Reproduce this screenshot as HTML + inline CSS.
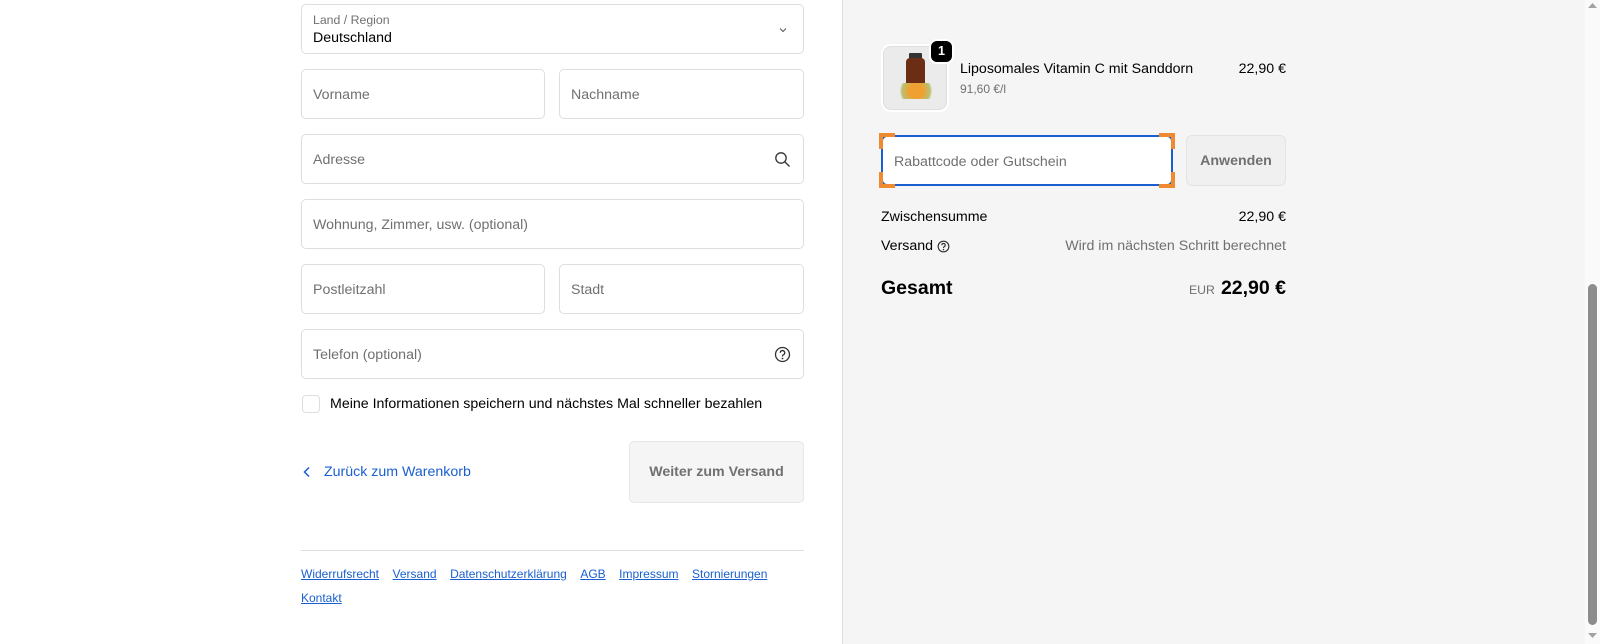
<!DOCTYPE html>
<html><head><meta charset="utf-8"><style>
*{box-sizing:border-box;margin:0;padding:0}
body{width:1600px;height:644px;overflow:hidden;background:#fff;font-family:"Liberation Sans",Arial,sans-serif;color:#000;position:relative;font-size:14px}
.a{position:absolute}
.f{position:absolute;border:1px solid #dedede;border-radius:5px;background:#fff}
.ph{position:absolute;left:11px;top:50%;transform:translateY(-45%);color:#707070;font-size:14.2px}
.right{position:absolute;left:842px;top:0;width:743px;height:644px;background:#f5f5f5;border-left:1px solid #dedede}
.sb{position:absolute;left:1585px;top:0;width:15px;height:644px;background:#fafafa}
.ft a{color:#1a5fd0;text-decoration:underline;font-size:12px;margin-right:13.5px}
</style></head><body>
<div class="f" style="left:301px;top:4px;width:503px;height:50px">
 <div class="a" style="left:11px;top:8px;font-size:12.3px;color:#707070">Land / Region</div>
 <div class="a" style="left:11px;top:25px;font-size:14.2px">Deutschland</div>
 <svg class="a" style="right:14px;top:19px" width="12" height="12" viewBox="0 0 12 12"><path d="M3 4.5l3 3 3-3" fill="none" stroke="#555" stroke-width="1"/></svg>
</div>
<div class="f" style="left:301px;top:69px;width:244px;height:50px"><span class="ph">Vorname</span></div>
<div class="f" style="left:559px;top:69px;width:245px;height:50px"><span class="ph">Nachname</span></div>
<div class="f" style="left:301px;top:134px;width:503px;height:50px"><span class="ph">Adresse</span>
 <svg class="a" style="right:12px;top:16px" width="17" height="17" viewBox="0 0 17 17"><circle cx="7" cy="7" r="5.2" fill="none" stroke="#333" stroke-width="1.3"/><path d="M11 11l4.5 4.5" stroke="#333" stroke-width="1.3"/></svg></div>
<div class="f" style="left:301px;top:199px;width:503px;height:50px"><span class="ph">Wohnung, Zimmer, usw. (optional)</span></div>
<div class="f" style="left:301px;top:264px;width:244px;height:50px"><span class="ph">Postleitzahl</span></div>
<div class="f" style="left:559px;top:264px;width:245px;height:50px"><span class="ph">Stadt</span></div>
<div class="f" style="left:301px;top:329px;width:503px;height:50px"><span class="ph">Telefon (optional)</span>
 <svg class="a" style="right:12px;top:16px" width="17" height="17" viewBox="0 0 17 17"><circle cx="8.5" cy="8.5" r="7" fill="none" stroke="#333" stroke-width="1.3"/><path d="M6.3 6.8a2.2 2.2 0 1 1 3 2c-.6.3-.8.7-.8 1.3v.4" fill="none" stroke="#333" stroke-width="1.3"/><circle cx="8.5" cy="12.5" r=".9" fill="#333"/></svg></div>
<div class="a" style="left:302px;top:395px;width:18px;height:18px;border:1px solid #dedede;border-radius:4px"></div>
<div class="a" style="left:330px;top:396px;font-size:14.2px">Meine Informationen speichern und nächstes Mal schneller bezahlen</div>
<svg class="a" style="left:301px;top:466px" width="12" height="12" viewBox="0 0 12 12"><path d="M8 1.5L3.5 6 8 10.5" fill="none" stroke="#1a5fd0" stroke-width="1.5"/></svg>
<div class="a" style="left:324px;top:464px;color:#1a5fd0;font-size:14.2px">Zurück zum Warenkorb</div>
<div class="a" style="left:629px;top:441px;width:175px;height:62px;background:#f5f5f5;border:1px solid #e6e6e6;border-radius:5px;color:#707070;font-weight:bold;font-size:14.2px;text-align:center;line-height:60px">Weiter zum Versand</div>
<div class="a" style="left:301px;top:550px;width:503px;height:1px;background:#dedede"></div>
<div class="a ft" style="left:301px;top:562px;width:520px;line-height:23px"><a>Widerrufsrecht</a><a>Versand</a><a>Datenschutzerklärung</a><a>AGB</a><a>Impressum</a><a>Stornierungen</a><br><a>Kontakt</a></div>

<div class="right"></div>
<div class="a" style="left:883px;top:46px;width:64px;height:64px;border:1px solid #dedede;border-radius:8px;background:#ebebeb;overflow:hidden;box-shadow:0 0 0 2px #fff">
 <div class="a" style="left:25px;top:6px;width:13px;height:6px;background:#333;border-radius:1px"></div>
 <div class="a" style="left:22px;top:11px;width:19px;height:40px;background:#6b2e14;border-radius:4px 4px 2px 2px"></div>
 <div class="a" style="left:10px;top:36px;width:44px;height:16px;background:radial-gradient(circle,#f0a030 0 30%,#b8c070 60%,transparent 70%)"></div>
</div>
<div class="a" style="left:931px;top:41px;width:21px;height:21px;background:#000;color:#fff;border-radius:6px;font-weight:bold;font-size:12.5px;text-align:center;line-height:21px;box-shadow:0 0 0 2px #fff">1</div>
<div class="a" style="left:960px;top:61px;font-size:14.2px">Liposomales Vitamin C mit Sanddorn</div>
<div class="a" style="left:960px;top:82px;font-size:12px;color:#707070">91,60 €/l</div>
<div class="a" style="left:1200px;top:61px;width:86px;text-align:right;font-size:14.2px">22,90 €</div>
<div class="a" style="left:881px;top:135px;width:292px;height:51px;background:#fff;border:2px solid #1a5fd0;border-radius:6px"><span class="ph" style="left:11px">Rabattcode oder Gutschein</span></div>
<div class="a" style="left:879px;top:133px;width:16px;height:4px;background:#f08a30"></div><div class="a" style="left:879px;top:133px;width:4px;height:16px;background:#f08a30"></div>
<div class="a" style="left:1159px;top:133px;width:16px;height:4px;background:#f08a30"></div><div class="a" style="left:1171px;top:133px;width:4px;height:16px;background:#f08a30"></div>
<div class="a" style="left:879px;top:184px;width:16px;height:4px;background:#f08a30"></div><div class="a" style="left:879px;top:172px;width:4px;height:16px;background:#f08a30"></div>
<div class="a" style="left:1159px;top:184px;width:16px;height:4px;background:#f08a30"></div><div class="a" style="left:1171px;top:172px;width:4px;height:16px;background:#f08a30"></div>
<div class="a" style="left:1186px;top:135px;width:100px;height:51px;background:#f0f0f0;border:1px solid #e3e3e3;border-radius:6px;color:#707070;font-weight:bold;font-size:14.2px;text-align:center;line-height:51px">Anwenden</div>
<div class="a" style="left:881px;top:209px;font-size:14.2px">Zwischensumme</div>
<div class="a" style="left:1150px;top:209px;width:136px;text-align:right;font-size:14.2px">22,90 €</div>
<div class="a" style="left:881px;top:238px;font-size:14.2px">Versand</div>
<svg class="a" style="left:937px;top:240px" width="13" height="13" viewBox="0 0 17 17"><circle cx="8.5" cy="8.5" r="7" fill="none" stroke="#333" stroke-width="1.5"/><path d="M6.3 6.8a2.2 2.2 0 1 1 3 2c-.6.3-.8.7-.8 1.3v.4" fill="none" stroke="#333" stroke-width="1.5"/><circle cx="8.5" cy="12.5" r="1" fill="#333"/></svg>
<div class="a" style="left:1000px;top:238px;width:286px;text-align:right;font-size:14.2px;color:#707070">Wird im nächsten Schritt berechnet</div>
<div class="a" style="left:881px;top:277px;font-size:19.5px;font-weight:bold">Gesamt</div>
<div class="a" style="left:1100px;top:277px;width:186px;text-align:right"><span style="font-size:12.3px;color:#707070;margin-right:6px">EUR</span><span style="font-size:19.5px;font-weight:bold">22,90 €</span></div>

<div class="sb">
 <svg class="a" style="left:3px;top:3px" width="9" height="6"><path d="M0 5L4.5 0 9 5z" fill="#a3a3a3"/></svg>
 <div class="a" style="left:3px;top:284px;width:9px;height:341px;background:#8c8c8c;border-radius:5px"></div>
 <svg class="a" style="left:3px;top:633px" width="9" height="6"><path d="M0 0L4.5 5 9 0z" fill="#a3a3a3"/></svg>
</div>
</body></html>
